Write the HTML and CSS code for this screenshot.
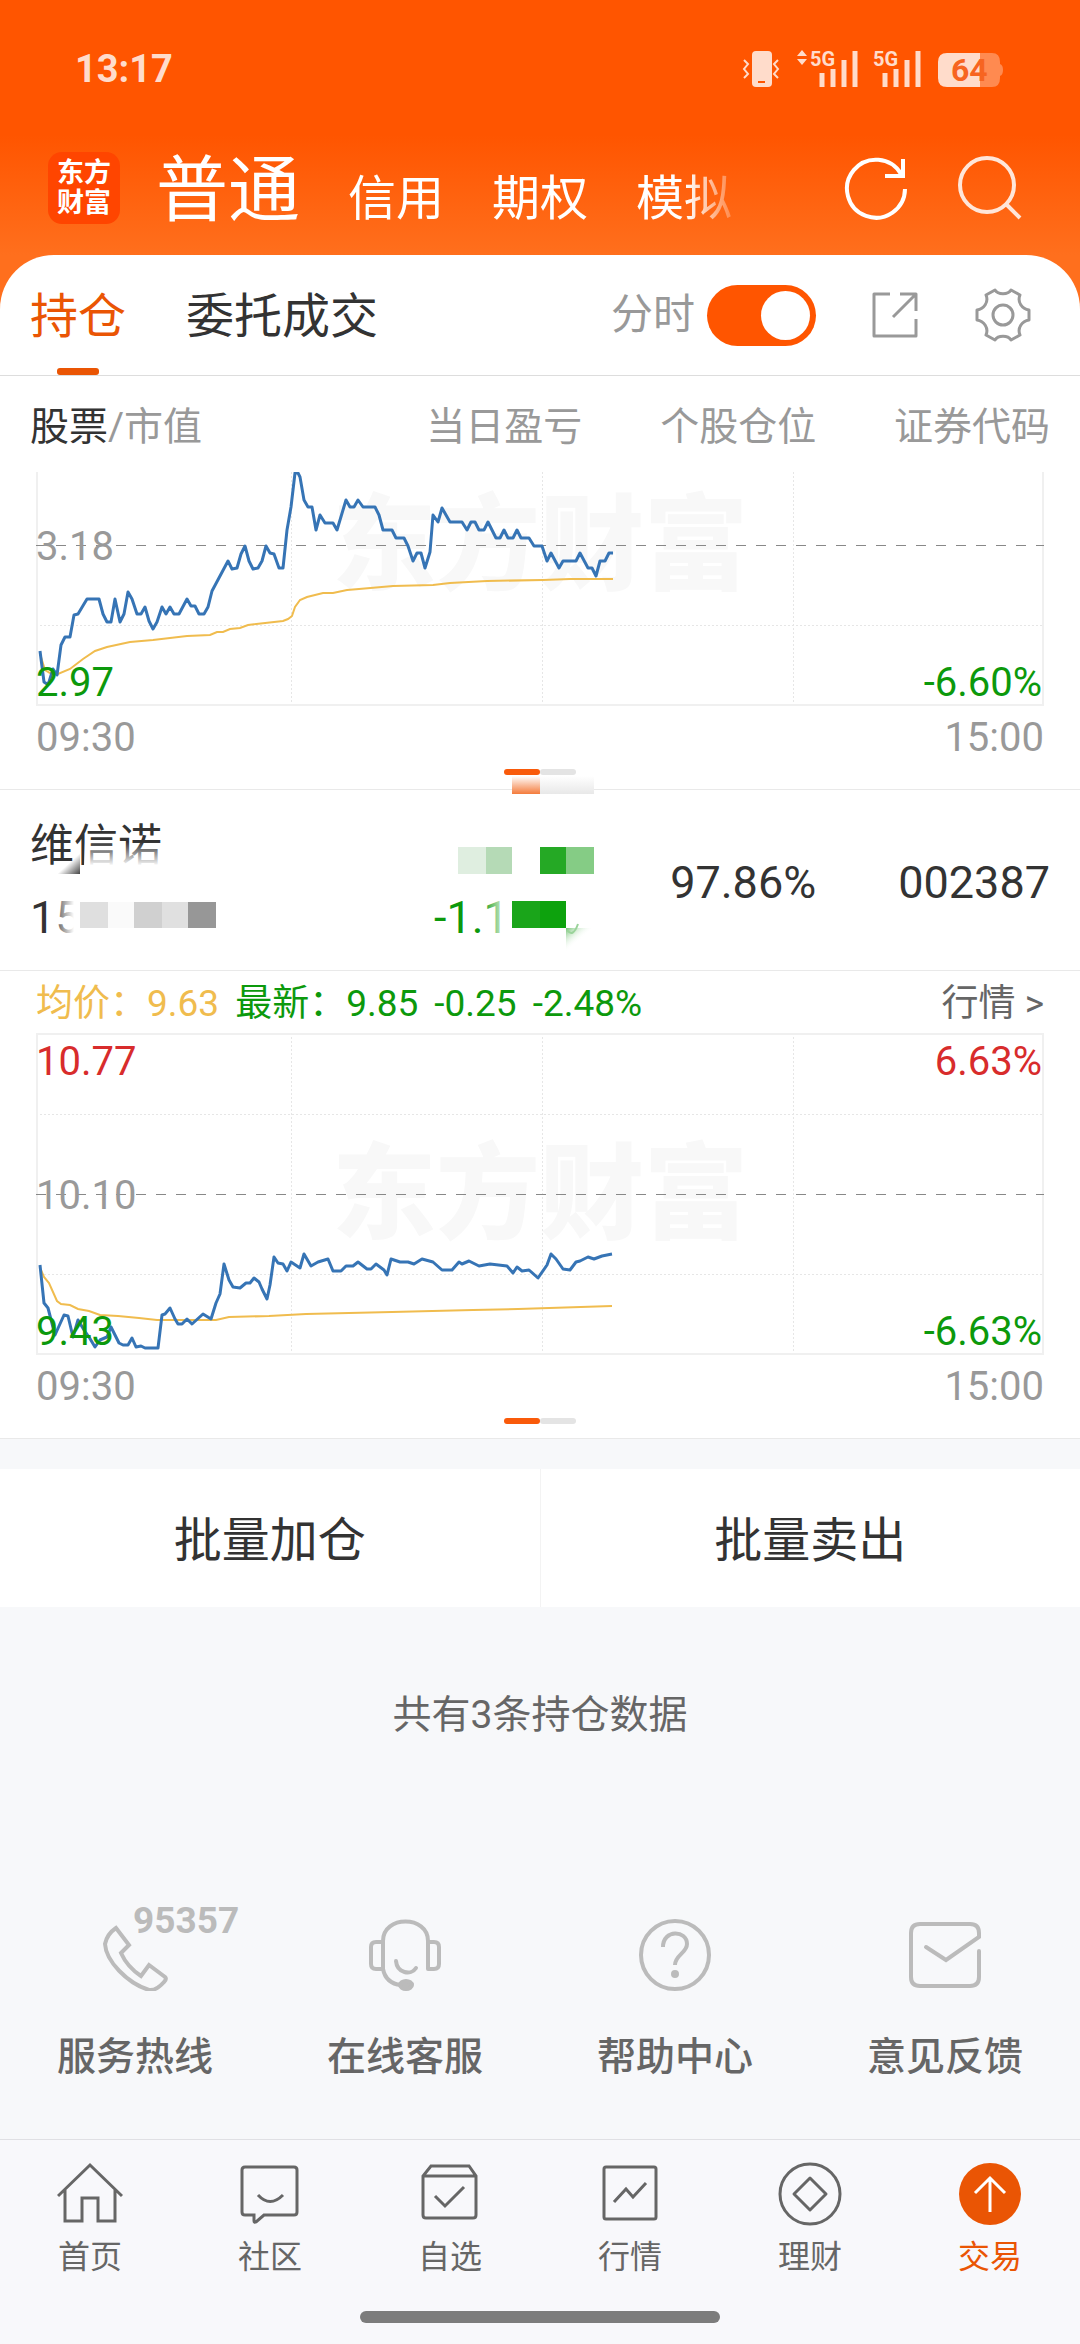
FILE: index.html
```html
<!DOCTYPE html>
<html lang="zh-CN">
<head>
<meta charset="utf-8">
<meta name="viewport" content="width=device-width, initial-scale=1">
<title>东方财富 - 交易持仓</title>
<link rel="stylesheet" href="styles.css">
</head>
<body>
<div class="app">
  <div class="status">
    <span class="clock">13:17</span>
    <div class="status-icons">
      <svg class="vibrate" viewBox="0 0 38 38" width="38" height="38" aria-hidden="true"><rect x="10" y="1" width="20" height="36" rx="4" fill="#ffdccb"/><path d="M16 32h7" stroke="#f50" stroke-width="2"/><path d="M2 10l4 4-4 5 4 5-4 4M36 10l-4 4 4 5-4 5 4 4" fill="none" stroke="#ffdccb" stroke-width="2"/></svg>
      <svg class="signal-one" viewBox="0 -6 62 50" width="62" height="50"><path d="M5 0l5 6H0zM5 15l5-6H0z" fill="#ffdccb"/><text x="13" y="16" class="net">5G</text><path d="M25 23v14M36 19v18M47 10v27M58 1v36" stroke="#ffdccb" stroke-width="5"/></svg>
      <svg class="signal-two" viewBox="0 -6 48 50" width="48" height="50"><text x="0" y="16" class="net">5G</text><path d="M12 23v14M23 19v18M34 10v27M45 1v36" stroke="#ffdccb" stroke-width="5"/></svg>
      <svg viewBox="0 0 68 38" width="68" height="38"><path d="M10 3H43V37H10Q1 37 1 28V12Q1 3 10 3Z" fill="#ffdccb"/><path d="M43 3H55Q63 3 63 12V14Q66 15 66 20T63 26V28Q63 37 55 37H43Z" fill="#ff8a50"/><text x="14" y="31" class="level">64</text></svg>
    </div>
  </div>

  <header class="header">
    <div class="logo"><span>东方</span><span>财富</span></div>
    <nav class="accounts">
      <a href="#" class="account account-on">普通</a>
      <a href="#" class="account">信用</a>
      <a href="#" class="account">期权</a>
      <a href="#" class="account">模拟</a>
    </nav>
    <button class="icon-btn" aria-label="刷新"><svg viewBox="0 0 64 64" width="64" height="64" fill="none" stroke="#fff" stroke-width="4"><path d="M61 33A29 29 0 1 1 57 18"/><path d="M59 3V20H41"/></svg></button>
    <button class="icon-btn" aria-label="搜索"><svg viewBox="0 0 64 64" width="64" height="64" fill="none" stroke="#ffe6d9" stroke-width="4"><circle cx="29" cy="29" r="27"/><path d="M48 48L62 62"/></svg></button>
  </header>

  <main class="sheet">
    <div class="tabs">
      <a href="#" class="tab tab-on">持仓</a>
      <a href="#" class="tab">委托成交</a>
      <label class="switch-label" for="intraday">分时</label>
      <input class="switch" type="checkbox" id="intraday" checked>
      <button class="icon-btn" aria-label="分享"><svg viewBox="0 0 58 58" width="58" height="58" fill="none" stroke="#999" stroke-width="3"><path d="M24 8H8V50H50V33M34 8H50V25M27 31L49 9" stroke-linejoin="round"/></svg></button>
      <button class="icon-btn" aria-label="设置"><svg viewBox="-29 -29 58 58" width="58" height="58" fill="none" stroke="#999" stroke-width="3" stroke-linejoin="round"><path d="M-17 -20L-8 -25C-5 -20 5 -20 8 -25L17 -20C14 -13 19 -6 26 -5V5C19 6 14 13 17 20L8 25C5 20 -5 20 -8 25L-17 20C-14 13 -19 6 -26 5V-5C-19 -6 -14 -13 -17 -20Z"/><circle r="10"/></svg></button>
    </div>

    <table class="holdings">
      <colgroup><col class="c-name"><col class="c-profit"><col class="c-ratio"><col class="c-code"></colgroup>
      <thead>
        <tr><th class="left"><b>股票</b>/市值</th><th>当日盈亏</th><th>个股仓位</th><th>证券代码</th></tr>
      </thead>
      <tbody>
        <tr class="divided">
          <td colspan="4" class="chart-cell">
            <div class="plot plot-short">
              <span class="watermark">东方财富</span>
              <svg class="lines" viewBox="36 472 1008 234" preserveAspectRatio="none" fill="none">
                <path class="dots" d="M36 625.500H1044M291.500 472V706M542.500 472V706M793.500 472V706"/>
                <path class="frame" d="M37 472V705H1043V472"/>
                <path class="dash" d="M36 545.500H1044"/>
                <path class="avg" d="M41 657L45 670 50 673 58 674 70 669 83 659 95 651 107 647 130 642 153 640 187 636 210 635 217 632 223 632 230 629 240 628 248 625 283 621 288 619 292 616 295 607 300 600 307 597 323 593 333 593 347 590 359 589 393 586 433 585 450 583 487 581 543 580 570 579 613 579"/>
                <path class="price" d="M40 651L44 682 47 684 49 682 53 669 57 675 61 645 65 637 70 637 74 615 78 614 87 599 99 599 103 614 107 622 111 622 115 599 120 622 124 614 128 592 132 599 137 614 141 614 145 607 149 621 153 629 157 622 162 607 166 614 170 607 174 614 179 614 187 599 191 606 195 606 199 614 204 614 208 607 212 591 228 561 232 569 237 568 241 554 245 546 249 561 253 569 258 568 262 561 266 546 270 553 274 554 279 568 283 568 287 530 291 507 295 473 298 473 300 477 304 500 308 507 312 507 316 530 320 515 325 523 333 523 337 530 346 500 350 507 354 507 358 500 363 507 375 507 379 515 383 530 392 530 396 538 404 538 408 546 413 561 417 553 421 553 425 568 430 552 433 515 438 522 442 508 450 522 462 522 467 530 471 522 475 522 479 530 484 530 488 522 496 538 500 538 504 530 508 538 513 538 517 530 521 538 529 538 534 546 542 546 547 561 551 553 559 568 563 561 576 561 580 553 588 568 592 568 596 576 600 561 605 561 609 553 613 553"/>
              </svg>
              <span class="mark mid">3.18</span>
              <span class="mark low">2.97</span>
              <span class="mark low end">-6.60%</span>
            </div>
            <div class="axis"><span>09:30</span><span>15:00</span></div>
            <div class="pager"><i class="on"></i><i></i><svg class="pager-smear" viewBox="0 0 82 22" width="82" height="22"><defs><linearGradient id="so" x1="0" y1="0" x2="0" y2="1"><stop offset="0" stop-color="#fff"/><stop offset="1" stop-color="#f47b3b"/></linearGradient><linearGradient id="sg" x1="0" y1="0" x2="0" y2="1"><stop offset="0" stop-color="#fff"/><stop offset="1" stop-color="#e8e8e8"/></linearGradient></defs><path d="M0 2H28V20H0Z" fill="url(#so)"/><path d="M28 2H82V20H28Z" fill="url(#sg)"/></svg></div>
          </td>
        </tr>
        <tr class="divided stock">
          <td class="left">
            <div class="name">维信诺</div>
            <div class="value">15</div>
            <svg class="veil veil-left" viewBox="0 0 230 180" width="230" height="180" aria-hidden="true">
              <defs>
                <linearGradient id="v1" x1="0" y1="0" x2="0" y2="1"><stop offset="0" stop-color="#fff" stop-opacity="0"/><stop offset="1" stop-color="#fff"/></linearGradient>
                <linearGradient id="v2" x1="0" y1="0" x2="1" y2="0"><stop offset="0" stop-color="#fff" stop-opacity="0"/><stop offset="1" stop-color="#fff"/></linearGradient>
                <linearGradient id="v3" x1="0" y1="0" x2="1" y2="1"><stop offset=".5" stop-color="#444" stop-opacity="0"/><stop offset="1" stop-color="#444"/></linearGradient>
              </defs>
              <path d="M84 52H170V76H84Z" fill="url(#v1)"/><path d="M84 76H170V90H84Z" fill="#fff"/>
              <path d="M57 63H80V84H57Z" fill="url(#v3)"/>
              <path d="M52 108H74V150H52Z" fill="url(#v2)"/><path d="M74 108H80V150H74Z" fill="#fff"/>
              <path d="M80 112H108V138H80Z" fill="#dfdfdf"/><path d="M108 112H134V138H108Z" fill="#fafafa"/><path d="M134 112H162V138H134Z" fill="#d0d0d0"/><path d="M162 112H188V138H162Z" fill="#e0e0e0"/><path d="M188 112H216V138H188Z" fill="#979797"/>
            </svg>
          </td>
          <td>
            <div class="profit">-1.1</div>
            <svg class="veil veil-right" viewBox="0 0 220 180" width="220" height="180" aria-hidden="true">
              <defs><linearGradient id="v4" x1="0" y1="0" x2="1" y2="1"><stop offset="0" stop-color="#72c272"/><stop offset=".5" stop-color="#fff" stop-opacity="0"/></linearGradient></defs>
              <path d="M90 108H116V150H90Z" fill="url(#v2)"/>
              <path d="M66 57H94V84H66Z" fill="#dfeee0"/><path d="M94 57H120V84H94Z" fill="#b5dab6"/><path d="M148 57H174V84H148Z" fill="#25a925"/><path d="M174 57H202V84H174Z" fill="#85cc85"/>
              <path d="M120 111H148V138H120Z" fill="#1aa51a"/><path d="M148 111H174V138H148Z" fill="#0da20d"/>
              <path d="M174 138H202L174 162Z" fill="url(#v4)"/><path d="M175 140Q181 148 186 134" fill="none" stroke="#9ad39a" stroke-width="2"/>
            </svg>
          </td>
          <td class="figure">97.86%</td>
          <td class="figure">002387</td>
        </tr>
        <tr class="divided">
          <td colspan="4" class="chart-cell">
            <div class="quote">
              <span class="avg-text">均价：9.63</span>
              <span class="last-text">最新：9.85</span>
              <span class="last-text">-0.25</span>
              <span class="last-text">-2.48%</span>
              <a href="#" class="more">行情 &gt;</a>
            </div>
            <div class="plot plot-tall">
              <span class="watermark">东方财富</span>
              <svg class="lines" viewBox="36 1033 1008 322" preserveAspectRatio="none" fill="none">
                <path class="dots" d="M36 1114.500H1044M36 1274.500H1044M291.500 1033V1355M542.500 1033V1355M793.500 1033V1355"/>
                <path class="frame" d="M37 1034H1043V1354H37Z"/>
                <path class="dash" d="M36 1194.500H1044"/>
                <path class="avg" d="M41 1270L44 1277 49 1283 57 1301 61 1304 70 1305 78 1309 89 1311 100 1315 118 1316 139 1318 157 1320 216 1320 229 1317 269 1316 306 1314 392 1312 473 1310 518 1309 612 1306"/>
                <path class="price" d="M40 1265L44 1303 48 1308 55 1335 64 1315 68 1316 73 1337 78 1320 84 1330 89 1337 95 1347 100 1340 107 1337 111 1327 119 1343 123 1345 128 1345 132 1338 136 1347 141 1346 145 1348 158 1348 162 1315 165 1314 170 1308 175 1319 178 1324 182 1324 187 1319 192 1324 203 1314 211 1319 216 1303 220 1294 224 1264 229 1280 233 1287 240 1288 246 1283 250 1283 254 1278 259 1282 262 1289 267 1299 270 1285 274 1257 278 1263 283 1264 287 1271 291 1262 300 1268 304 1254 311 1266 318 1262 328 1259 333 1271 341 1271 346 1266 353 1266 358 1262 367 1269 371 1269 376 1264 384 1270 387 1275 391 1259 400 1262 408 1262 414 1264 422 1259 433 1262 442 1270 452 1270 459 1262 462 1264 469 1261 479 1266 490 1264 507 1266 513 1273 517 1267 522 1271 529 1270 538 1278 547 1265 551 1254 556 1259 563 1269 570 1270 576 1262 580 1261 588 1257 594 1259 602 1256 612 1254"/>
              </svg>
              <span class="mark high">10.77</span>
              <span class="mark high end">6.63%</span>
              <span class="mark mid">10.10</span>
              <span class="mark low">9.43</span>
              <span class="mark low end">-6.63%</span>
            </div>
            <div class="axis"><span>09:30</span><span>15:00</span></div>
            <div class="pager"><i class="on"></i><i></i></div>
          </td>
        </tr>
      </tbody>
    </table>
  </main>

  <div class="batch">
    <button>批量加仓</button>
    <button>批量卖出</button>
  </div>
  <p class="count">共有3条持仓数据</p>

  <div class="services">
    <a href="#"><span class="glyph"><svg viewBox="0 0 72 72" width="72" height="72"><path d="M17 9L30 26L22 34C26 43 33 51 42 57L50 46L66 58Q68 60 65 63Q57 72 50 71C28 64 7 42 6 25Q8 15 17 9Z"/></svg><em>95357</em></span>服务热线</a>
    <a href="#"><span class="glyph"><svg viewBox="0 0 72 72" width="72" height="72"><path d="M14 50V22C14 -4 59 -4 59 22V50M14 23H7Q2 23 2 28V45Q2 50 7 50H14M59 23H65Q70 23 70 28V45Q70 50 65 50H59M14 50C16 60 22 65 32 66M27 42C28 54 42 57 47 49" stroke-linecap="round"/><ellipse cx="37" cy="66" rx="6" ry="4" fill="#bbb"/></svg></span>在线客服</a>
    <a href="#"><span class="glyph"><svg viewBox="0 0 72 72" width="72" height="72"><circle cx="36" cy="36" r="34"/><path d="M24 28C24 10 48 11 48 25C48 34 36 36 36 46" /><circle cx="36" cy="55" r="2"/></svg></span>帮助中心</a>
    <a href="#"><span class="glyph"><svg viewBox="0 0 72 72" width="72" height="72"><path d="M70 32V58Q70 67 61 67H11Q2 67 2 58V14Q2 5 11 5H61Q70 5 70 14V18L37 41L17 28" stroke-linecap="round"/></svg></span>意见反馈</a>
  </div>

  <nav class="tabbar">
    <a href="#"><svg viewBox="0 0 66 66" width="66" height="66"><path d="M1 35L33 4L65 35M8 29V60H25V37H41V60H58V29"/></svg>首页</a>
    <a href="#"><svg viewBox="0 0 66 66" width="66" height="66"><path d="M8 6H57Q60 6 60 9V51Q60 54 57 54H27L19 61Q17 62 17 60V54H8Q5 54 5 51V9Q5 6 8 6ZM21 34Q33 47 46 34"/></svg>社区</a>
    <a href="#"><svg viewBox="0 0 66 66" width="66" height="66"><path d="M14 5H52L59 15V54Q59 57 56 57H9Q6 57 6 54V15ZM6 15H59M18 35L28 45L47 26"/></svg>自选</a>
    <a href="#"><svg viewBox="0 0 66 66" width="66" height="66"><rect x="7" y="6" width="52" height="52" rx="2"/><path d="M17 41L29 28L36 36L49 22"/></svg>行情</a>
    <a href="#"><svg viewBox="0 0 66 66" width="66" height="66"><circle cx="33" cy="33" r="30"/><path d="M33 17L49 33L33 49L17 33Z" stroke-linejoin="round"/></svg>理财</a>
    <a href="#" class="tabbar-on"><svg viewBox="0 0 66 66" width="66" height="66"><circle cx="33" cy="33" r="31" fill="#ea5504" stroke="none"/><path d="M33 51V18M18 32L33 17L48 32" stroke="#fff"/></svg>交易</a>
  </nav>
  <div class="home-bar"><i></i></div>
</div>
</body>
</html>
```
FILE: styles.css
```css
* {
  box-sizing: border-box;
}

body {
  margin: 0;
  font-family: Roboto, "Noto Sans CJK SC", sans-serif;
  color: #333;
  background: #f7f8fa;
}

a {
  color: inherit;
  text-decoration: none;
}

button {
  margin: 0;
  padding: 0;
  border: 0;
  background: none;
  font: inherit;
  color: inherit;
}

svg {
  display: block;
}

.app {
  background: linear-gradient(#f50 0, #f50 135px, #ff6f1d 255px, #ff6f1d 310px, #f7f8fa 310px);
}

/* status bar */
.status {
  display: flex;
  justify-content: space-between;
  align-items: center;
  height: 120px;
  padding: 18px 75px 0;
}

.clock {
  font-size: 38px;
  font-weight: 700;
  color: #ffdccb;
}

.status-icons {
  display: flex;
  align-items: center;
}

.vibrate {
  margin-right: 17px;
}

.signal-one {
  margin-right: 14px;
}

.signal-two {
  margin-right: 16px;
}

.net {
  font: 700 20px Roboto, sans-serif;
  fill: #ffdccb;
}

.level {
  font: 700 32px Roboto, sans-serif;
  fill: #f76420;
}

/* account header */
.header {
  display: flex;
  align-items: center;
  height: 135px;
  padding: 0 58px 0 48px;
}

.logo {
  display: flex;
  flex-direction: column;
  align-items: center;
  justify-content: center;
  width: 72px;
  height: 72px;
  margin-right: 36px;
  border-radius: 14px;
  background: #ff4500;
  color: #fff;
  font-size: 27px;
  font-weight: 700;
  line-height: 30px;
}

.accounts {
  display: flex;
  flex: 1;
  align-items: baseline;
  gap: 48px;
  padding-top: 14px;
  line-height: 100px;
  mask-image: linear-gradient(90deg, #000 530px, transparent 590px);
}

.account {
  font-size: 48px;
  color: #fff;
}

.account-on {
  font-size: 72px;
}

.header .icon-btn + .icon-btn {
  margin-left: 50px;
}

/* white sheet */
.sheet {
  border-radius: 54px 54px 0 0;
  background: #fff;
  overflow: hidden;
}

.tabs {
  display: flex;
  align-items: center;
  height: 121px;
  padding: 0 48px 0 30px;
  border-bottom: 1px solid #ddd;
}

.tab {
  position: relative;
  margin-right: 60px;
  padding-top: 4px;
  font-size: 48px;
  line-height: 116px;
}

.tab-on {
  color: #ea5504;
}

.tab-on::after {
  content: "";
  position: absolute;
  left: 50%;
  bottom: 0;
  width: 42px;
  height: 7px;
  margin-left: -21px;
  border-radius: 3px;
  background: #ea5504;
}

.switch-label {
  margin-left: auto;
  font-size: 42px;
  line-height: 58px;
  color: #999;
}

.switch {
  appearance: none;
  position: relative;
  width: 109px;
  height: 61px;
  margin: 0 0 0 12px;
  border-radius: 31px;
  background: #f50;
}

.switch::before {
  content: "";
  position: absolute;
  top: 6px;
  right: 6px;
  width: 49px;
  height: 49px;
  border-radius: 50%;
  background: #fff;
}

.tabs .icon-btn {
  margin-left: 50px;
}

/* holdings table */
.holdings {
  width: 100%;
  table-layout: fixed;
  border-spacing: 0;
}

.c-name {
  width: 36.3%;
}

.c-profit {
  width: 20.4%;
}

.c-ratio,
.c-code {
  width: 21.65%;
}

th,
td {
  padding: 0 30px 0 0;
  text-align: right;
}

th {
  height: 96px;
  padding-bottom: 2px;
  font-size: 39px;
  font-weight: 400;
  color: #999;
}

th b {
  font-weight: 400;
  color: #333;
}

.left {
  padding-left: 30px;
  text-align: left;
}

.divided td {
  border-bottom: 1px solid #e9e9e9;
}

.divided .chart-cell {
  padding: 0 36px 14px;
}

.plot {
  position: relative;
  display: flex;
  align-items: center;
  justify-content: center;
}

.plot-short {
  height: 234px;
  padding-bottom: 84px;
}

.plot-tall {
  height: 322px;
  padding-top: 4px;
}

.watermark {
  font-size: 104px;
  font-weight: 900;
  line-height: 120px;
  color: #f8f8f8;
}

.lines {
  position: absolute;
  top: 0;
  left: 0;
  width: 100%;
  height: 100%;
}

.frame {
  stroke: #f0f0f0;
  stroke-width: 2;
}

.dots {
  stroke: #e6e6e6;
  stroke-width: 1;
  stroke-dasharray: 2 2;
}

.dash {
  stroke: #888;
  stroke-width: 1;
  stroke-dasharray: 10 10;
}

.avg {
  stroke: #f0bc4e;
  stroke-width: 2;
}

.price {
  stroke: #3674b5;
  stroke-width: 3;
  stroke-linejoin: round;
}

.mark {
  position: absolute;
  left: 0;
  font-size: 40px;
  line-height: 48px;
  color: #999;
}

.mark.end {
  left: auto;
  right: 2px;
}

.mark.high {
  top: 5px;
  color: #d82c2c;
}

.mark.mid {
  top: 139px;
}

.plot-short .mark.mid {
  top: 51px;
}

.mark.low {
  bottom: -1px;
  color: #0c990c;
}

.axis {
  display: flex;
  justify-content: space-between;
  padding-top: 1px;
  font-size: 40px;
  line-height: 62px;
  color: #999;
}

.pager {
  position: relative;
  display: flex;
  justify-content: center;
}

.pager i {
  width: 36px;
  height: 6px;
  border-radius: 3px;
  background: #e4e4e4;
}

.pager .on {
  background: #f95a0a;
}

.pager-smear {
  position: absolute;
  top: 5px;
  left: 50%;
  margin-left: -28px;
}

/* stock row */
.stock td {
  position: relative;
  height: 181px;
  font-size: 45px;
}

.stock .figure {
  padding-top: 4px;
}

.stock .name {
  padding-top: 4px;
  font-size: 44px;
  line-height: 60px;
}

.stock .value,
.stock .profit {
  margin-top: 12px;
  line-height: 60px;
}

.stock .profit {
  margin-top: 76px;
  padding-left: 42px;
  text-align: left;
  color: #0c990c;
}

.veil {
  position: absolute;
  top: 0;
  left: 0;
}

.quote {
  display: flex;
  gap: 16px;
  padding-top: 4px;
  font-size: 37px;
  line-height: 58px;
}

.avg-text {
  color: #f0bc4e;
}

.last-text {
  color: #0c990c;
}

.more {
  margin-left: auto;
  color: #666;
}

/* batch actions */
.batch {
  display: flex;
  margin-top: 30px;
  background: #fff;
}

.batch button {
  flex: 1;
  height: 138px;
  padding-bottom: 4px;
  font-size: 48px;
}

.batch button + button {
  border-left: 1px solid #f3f3f3;
}

.count {
  margin: 78px 0 0;
  font-size: 39px;
  line-height: 60px;
  text-align: center;
  color: #666;
}

/* services */
.services {
  display: grid;
  grid-template-columns: repeat(4, 1fr);
  padding: 174px 0 52px;
}

.services a {
  display: flex;
  flex-direction: column;
  align-items: center;
  gap: 36px;
  font-size: 39px;
  font-weight: 500;
  line-height: 60px;
  color: #666;
}

.glyph {
  position: relative;
  fill: none;
  stroke: #bbb;
  stroke-width: 4;
}

.glyph em {
  position: absolute;
  top: -16px;
  left: 34px;
  font-size: 37px;
  font-style: normal;
  font-weight: 700;
  line-height: 36px;
  color: #bbb;
}

/* bottom navigation */
.tabbar {
  display: grid;
  grid-template-columns: repeat(6, 1fr);
  padding: 21px 0 0;
  border-top: 1px solid #e0e0e4;
  background: #f8f8fb;
}

.tabbar a {
  display: flex;
  flex-direction: column;
  align-items: center;
  gap: 10px;
  font-size: 32px;
  line-height: 40px;
  color: #666;
}

.tabbar svg {
  fill: none;
  stroke: #666;
  stroke-width: 3;
}

.tabbar .tabbar-on {
  color: #ea5504;
}

.home-bar {
  padding: 34px 0 21px;
  background: #f8f8fb;
}

.home-bar i {
  display: block;
  width: 33.3%;
  height: 12px;
  margin: 0 auto;
  border-radius: 6px;
  background: #7c7c7c;
}
```
